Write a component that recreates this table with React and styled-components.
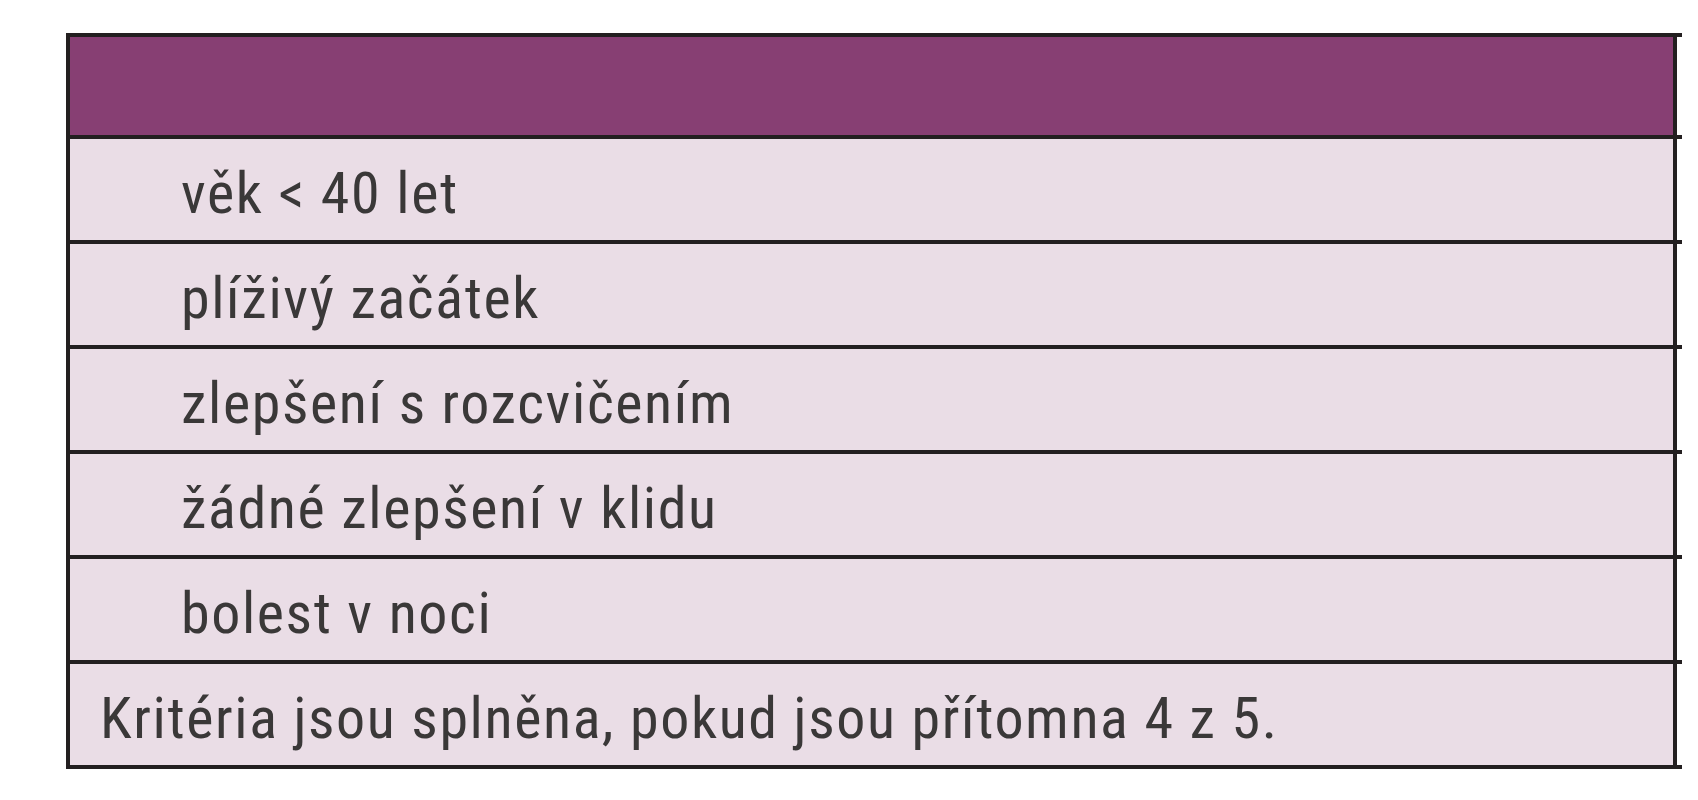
import React from 'react';
import styled, { createGlobalStyle } from 'styled-components';

const GlobalStyle = createGlobalStyle`
    body {
        margin: 0;
        background: #ffffff;
        font-family: Roboto, "Open Sans", sans-serif;
    }
`;

const criteria = [
    'věk < 40 let',
    'plíživý začátek',
    'zlepšení s rozcvičením',
    'žádné zlepšení v klidu',
    'bolest v noci',
];

const Page = styled.div`
    padding: 33px 0 0 66px;
`;

const Table = styled.div`
    width: 1616px;
    border-top: 4px solid #231f20;
`;

const Row = styled.div`
    display: flex;
    padding-right: 5px;
    border-bottom: 4px solid #231f20;
`;

const Cell = styled.div`
    flex: 1;
    box-sizing: border-box;
    height: ${p => (p.$head ? 98 : 101)}px;
    padding: 25px 0 0 ${p => (p.$indent ? 111 : 30)}px;
    border-left: 4px solid #231f20;
    border-right: 4px solid #231f20;
    background: ${p => (p.$head ? '#873f73' : '#eadde6')};
    color: #3a3838;
    font-size: 58px;
    font-stretch: condensed;
    letter-spacing: 1.6px;
    line-height: 1;
    white-space: nowrap;
`;

export default function App() {
    return (
        <Page>
            <GlobalStyle />
            <Table>
                <Row>
                    <Cell $head />
                </Row>
                {criteria.map(text => (
                    <Row key={text}>
                        <Cell $indent>{text}</Cell>
                    </Row>
                ))}
                <Row>
                    <Cell>Kritéria jsou splněna, pokud jsou přítomna 4 z 5.</Cell>
                </Row>
            </Table>
        </Page>
    );
}
